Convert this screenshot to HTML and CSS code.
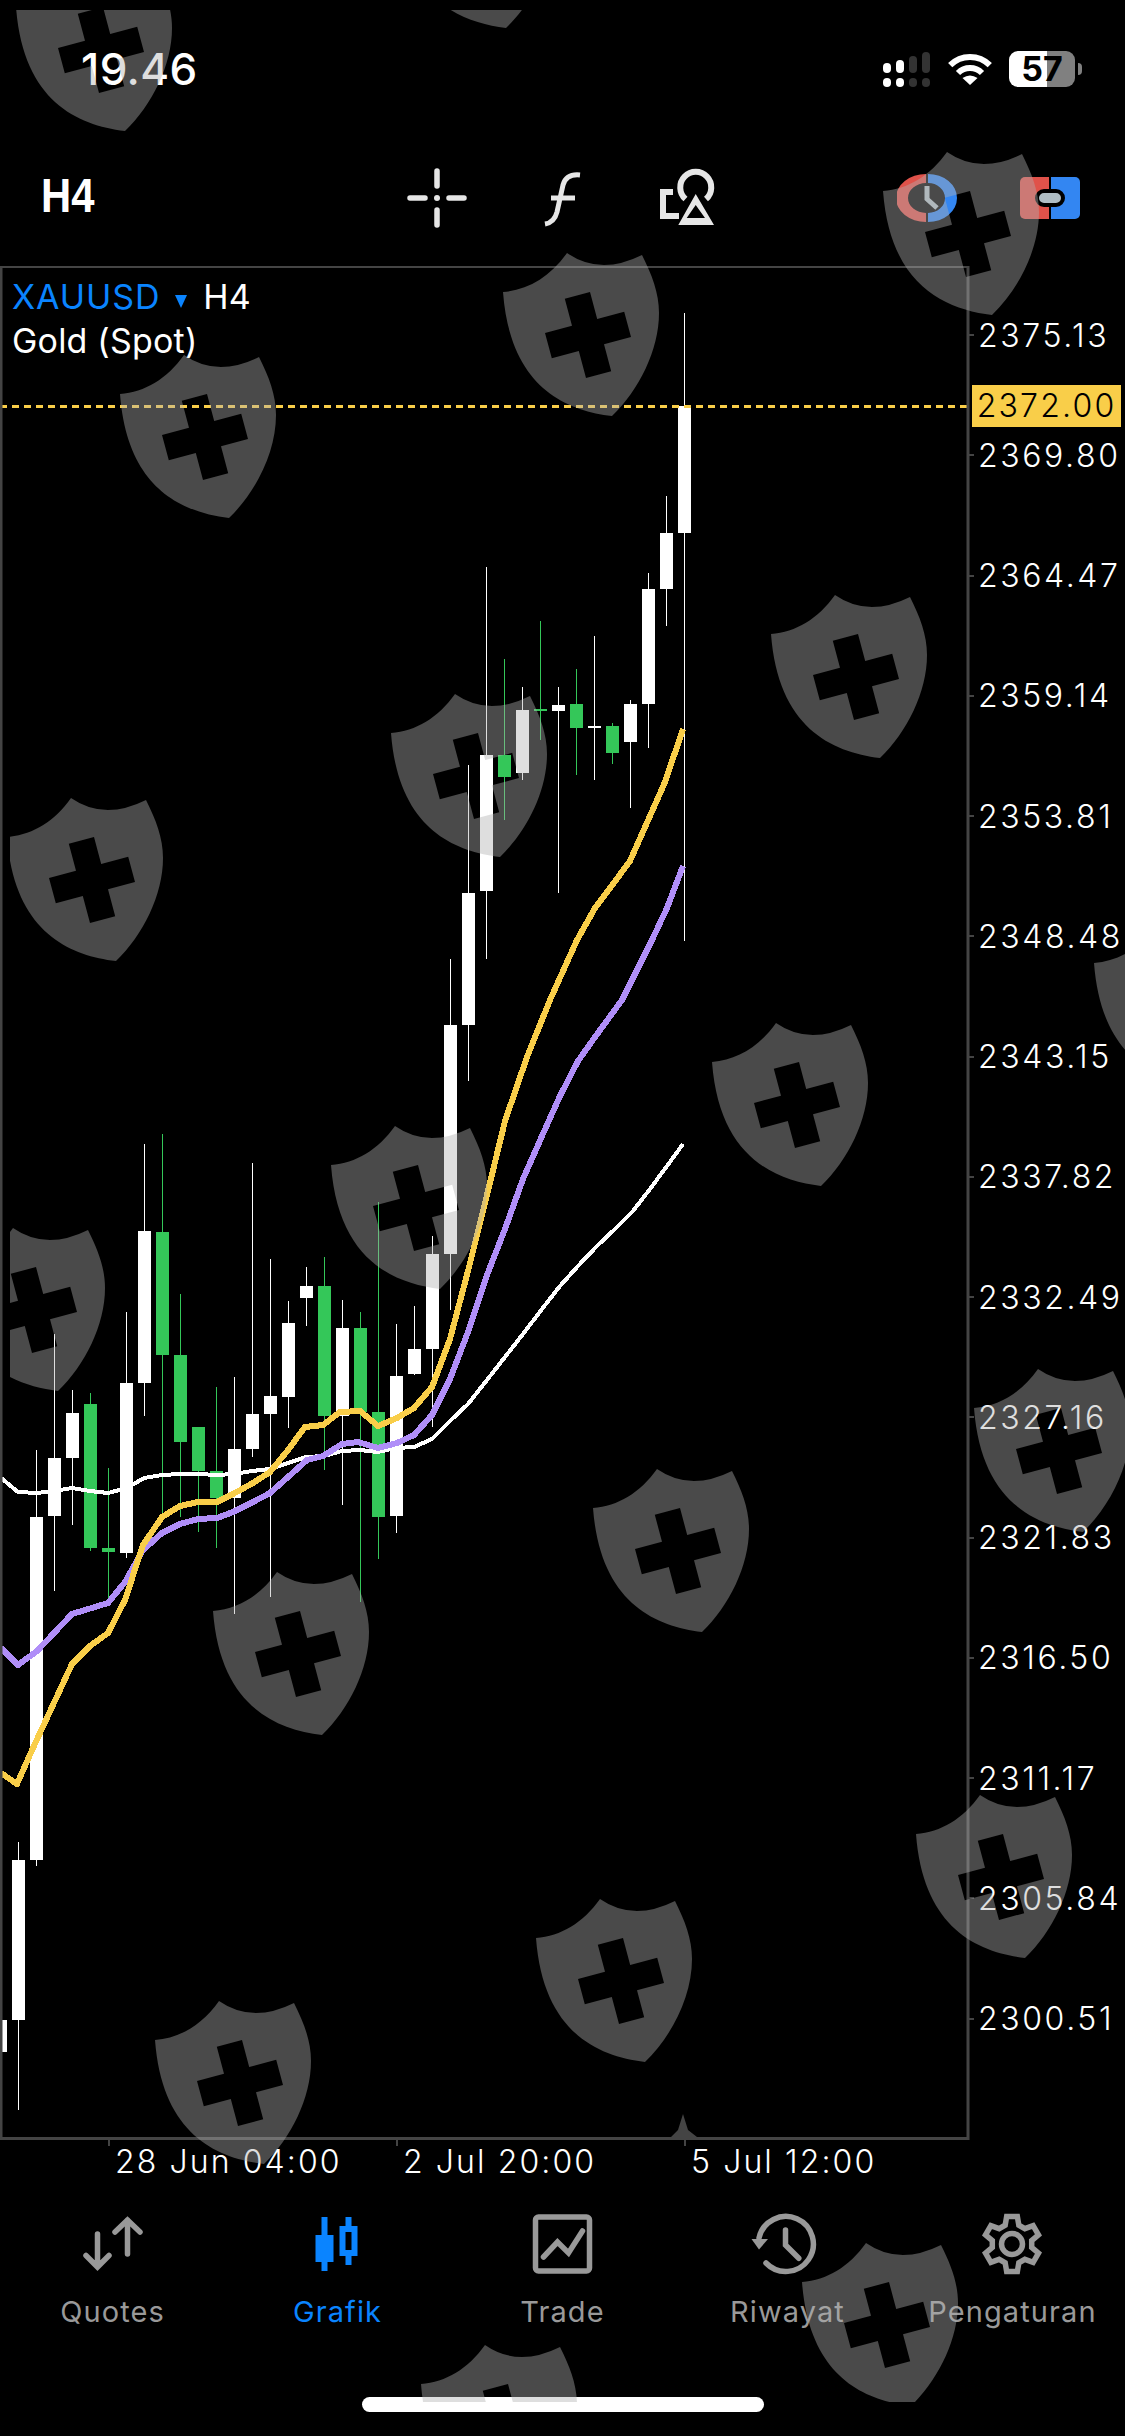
FILE: index.html
```html
<!DOCTYPE html>
<html lang="id">
<head>
    <meta charset="UTF-8">
    <meta name="viewport" content="width=device-width, initial-scale=1.0">
    <title>XAUUSD H4</title>
    <link rel="stylesheet" href="styles.css">
</head>
<body>
    <div class="status">
        <span class="clock">19.46</span>
        <div class="status-icons">
            <svg class="signal" width="48" height="36" viewBox="0 0 48 36">
                <rect class="on" x="0" y="12" width="8" height="10" rx="4"/>
                <rect class="on" x="13" y="9" width="8" height="13" rx="4"/>
                <rect class="off" x="26" y="5" width="8" height="17" rx="4"/>
                <rect class="off" x="39" y="1" width="8" height="21" rx="4"/>
                <rect class="on" x="0" y="27" width="8" height="9" rx="4"/>
                <rect class="on" x="13" y="27" width="8" height="9" rx="4"/>
                <rect class="off" x="26" y="27" width="8" height="9" rx="4"/>
                <rect class="off" x="39" y="27" width="8" height="9" rx="4"/>
            </svg>
            <svg class="wifi" width="46" height="34" viewBox="0 0 46 34">
                <path d="M3.2,13.2 A28,28 0 0 1 42.8,13.2 M11,21 A17,17 0 0 1 35,21"/>
                <path class="wifi-dot" d="M23,33 L15.5,26 Q23,21 30.5,26 Z"/>
            </svg>
            <div class="battery"><span>57</span></div>
            <div class="battery-cap"></div>
        </div>
    </div>

    <div class="toolbar">
        <div class="period"><span>H4</span></div>
        <svg class="tool" width="60" height="60" viewBox="0 0 60 60">
            <path d="M30,3 V18 M30,42 V57 M3,30 H18 M42,30 H57"/>
            <circle class="dot" cx="30" cy="30" r="3"/>
        </svg>
        <svg class="tool" width="60" height="60" viewBox="0 0 60 60">
            <path class="thin" d="M48,7 C38,6 33,10 31,17 L25,44 C23,52 19,55 13,56 M19,30 H43"/>
        </svg>
        <svg class="tool" width="60" height="60" viewBox="0 0 60 60">
            <path class="sharp" d="M16,24 H6 V48 H22"/>
            <path class="sharp" d="M28.5,31 A15.5,15.5 0 1 1 49,31"/>
            <path class="solid" fill-rule="evenodd" d="M38.7,26 L57,57 H21.3 Z M38.7,37 L29.7,50 H48 Z"/>
        </svg>
        <div class="tool-right">
            <svg width="60" height="48" viewBox="0 0 60 48">
                <path class="red" d="M29,0 A30,24 0 0 0 29,48 V39 A18,15 0 0 1 29,9 Z"/>
                <path class="blue" d="M31,0 A29,24 0 0 1 31,48 V39 A17,15 0 0 0 31,9 Z"/>
                <path class="hand" d="M30,12 V25 L40,34"/>
            </svg>
            <div class="chip"><span></span></div>
        </div>
    </div>

    <div class="main">
        <div class="plot">
            <svg id="chart" width="970" height="1874" viewBox="0 266 970 1874">
                <g id="candles"></g>
                <g id="lines"></g>
                <line class="bid-line" x1="0" y1="406.5" x2="967" y2="406.5"/>
                <polygon class="peak" points="683,2114 688,2130 697,2137 671,2137 678,2130"/>
                <rect class="frame" x="1" y="266.5" width="967" height="1872"/>
            </svg>
            <div class="legend">
                <div><span class="symbol">XAUUSD</span><span class="caret"></span><span>H4</span></div>
                <div>Gold (Spot)</div>
            </div>
        </div>
        <div class="prices">
            <div class="price">2375.13</div>
            <div class="price">2369.80</div>
            <div class="price">2364.47</div>
            <div class="price">2359.14</div>
            <div class="price">2353.81</div>
            <div class="price">2348.48</div>
            <div class="price">2343.15</div>
            <div class="price">2337.82</div>
            <div class="price">2332.49</div>
            <div class="price">2327.16</div>
            <div class="price">2321.83</div>
            <div class="price">2316.50</div>
            <div class="price">2311.17</div>
            <div class="price">2305.84</div>
            <div class="price">2300.51</div>
            <div class="bid-tag">2372.00</div>
        </div>
    </div>

    <div class="axis">
        <div class="date">28 Jun 04:00</div>
        <div class="date">2 Jul 20:00</div>
        <div class="date">5 Jul 12:00</div>
    </div>

    <div class="tabs">
        <div class="tab">
            <svg class="tab-icon" width="60" height="60" viewBox="0 0 60 60">
                <path d="M44.5,40 V6 M32,18 L44.5,6 L57,18 M14.5,20 V53 M3,41.5 L14.5,53 L26,41.5"/>
            </svg>
            <span>Quotes</span>
        </div>
        <div class="tab active">
            <svg class="tab-icon" width="60" height="60" viewBox="0 0 60 60">
                <path class="fill" fill-rule="evenodd" d="M13.5,3 H19.5 V21 H25.5 V48 H19.5 V57 H13.5 V48 H7.5 V21 H13.5 Z M37.5,3 H43.5 V12 H49.5 V42 H43.5 V51 H37.5 V42 H31.5 V12 H37.5 Z M37.5,18 V36 H43.5 V18 Z"/>
            </svg>
            <span>Grafik</span>
        </div>
        <div class="tab">
            <svg class="tab-icon" width="60" height="60" viewBox="0 0 60 60">
                <rect x="2.5" y="3" width="54" height="54" rx="3"/>
                <path d="M10.5,43 L24.5,28 L35.5,39 L49.5,17"/>
            </svg>
            <span>Trade</span>
        </div>
        <div class="tab">
            <svg class="tab-icon" width="60" height="60" viewBox="0 0 60 60">
                <path d="M1,24 A27.5,27.5 0 1 1 8,49 M27.5,16 V31 L40.8,44.3"/>
                <polygon class="fill" points="-6.5,25 10,25 1,35.5"/>
            </svg>
            <span>Riwayat</span>
        </div>
        <div class="tab">
            <svg class="tab-icon" width="60" height="60" viewBox="0 0 60 60">
                <g transform="translate(29,30)">
                    <polygon points="-6.84,-18.79 -5.34,-27.49 5.34,-27.49 6.84,-18.79 12.86,-15.32 21.13,-18.37 26.47,-9.12 19.7,-3.47 19.7,3.47 26.47,9.12 21.13,18.37 12.86,15.32 6.84,18.79 5.34,27.49 -5.34,27.49 -6.84,18.79 -12.86,15.32 -21.13,18.37 -26.47,9.12 -19.7,3.47 -19.7,-3.47 -26.47,-9.12 -21.13,-18.37 -12.86,-15.32"/>
                    <circle cx="0" cy="0" r="10.5"/>
                </g>
            </svg>
            <span>Pengaturan</span>
        </div>
    </div>

    <div class="home-bar"></div>

    <svg class="watermark" width="1115" height="2392" viewBox="10 10 1115 2392">
        <defs>
            <path id="shield" fill-rule="evenodd" d="M-21,-82 Q12,-59 54,-80 C64,-60 71,-42 71,-22 C71,15 51,55 24,81 C-25,75 -78,50 -85,-43 C-60,-45 -38,-58 -21,-82 Z M-23.2,-36.2 L2,-43 L9.2,-16 L36.2,-23.2 L43,2 L16,9.2 L23.2,36.2 L-2,43 L-9.2,16 L-36.2,23.2 L-43,-2 L-16,-9.2 Z"/>
        </defs>
        <use href="#shield" x="101" y="50"/>
        <use href="#shield" x="482" y="-53"/>
        <use href="#shield" x="968" y="234"/>
        <use href="#shield" x="588" y="335"/>
        <use href="#shield" x="205" y="437"/>
        <use href="#shield" x="856" y="677"/>
        <use href="#shield" x="476" y="776"/>
        <use href="#shield" x="92" y="880"/>
        <use href="#shield" x="797" y="1105"/>
        <use href="#shield" x="1179" y="1006"/>
        <use href="#shield" x="416" y="1208"/>
        <use href="#shield" x="34" y="1310"/>
        <use href="#shield" x="1059" y="1451"/>
        <use href="#shield" x="678" y="1551"/>
        <use href="#shield" x="298" y="1654"/>
        <use href="#shield" x="1001" y="1877"/>
        <use href="#shield" x="621" y="1981"/>
        <use href="#shield" x="240" y="2083"/>
        <use href="#shield" x="887" y="2325"/>
        <use href="#shield" x="506" y="2427"/>
    </svg>

    <script src="chart.js"></script>
</body>
</html>
```

FILE: styles.css
```css
* {
    box-sizing: border-box;
}

html, body {
    margin: 0;
    padding: 0;
}

body {
    position: relative;
    width: 1125px;
    height: 2436px;
    overflow: hidden;
    background-color: #000;
    color: #fff;
    font-family: Inter, "Noto Sans", sans-serif;
}

.status {
    display: flex;
    justify-content: space-between;
    height: 130px;
    padding: 51px 43px 0 81px;
}

.clock {
    font-size: 44px;
    font-weight: 500;
    letter-spacing: 0.4px;
    line-height: 36px;
}

.status-icons {
    display: flex;
    align-items: flex-start;
}

.signal .on {
    fill: #fff;
}

.signal .off {
    fill: #333;
}

.wifi {
    margin: 1px 0 0 16px;
    fill: none;
    stroke: #fff;
    stroke-width: 6;
}

.wifi .wifi-dot {
    fill: #fff;
    stroke: none;
}

.battery {
    width: 66px;
    height: 36px;
    margin-left: 16px;
    border-radius: 9px;
    background: linear-gradient(to right, #fff 0, #fff 38px, #808080 38px);
    color: #000;
    font-size: 34px;
    font-weight: 700;
    line-height: 36px;
    text-align: center;
}

.battery-cap {
    width: 4px;
    height: 12px;
    margin: 12px 0 0 3px;
    border-radius: 0 4px 4px 0;
    background-color: #808080;
}

.toolbar {
    display: flex;
    align-items: center;
    height: 136px;
}

.period {
    flex: none;
    width: 407px;
    padding: 0 0 6px 41px;
    font-family: "Liberation Sans", sans-serif;
    font-size: 48px;
    font-weight: 700;
}

.period span {
    display: inline-block;
    transform: scaleX(0.87);
    transform-origin: left center;
}

.tool {
    flex: none;
    margin-right: 65px;
    fill: none;
    stroke: #e6e6e6;
    stroke-width: 5.5;
    stroke-linecap: round;
}

.tool .dot {
    fill: #e6e6e6;
    stroke: none;
}

.tool .thin {
    stroke-width: 5;
    stroke-linecap: butt;
}

.tool .sharp {
    stroke-width: 6;
    stroke-linecap: butt;
}

.tool .solid {
    fill: #e6e6e6;
    stroke: none;
}

.tool-right {
    display: flex;
    align-items: center;
    gap: 63px;
    margin-left: 115px;
}

.tool-right .red {
    fill: #e0524a;
}

.tool-right .blue {
    fill: #3386f2;
}

.tool-right .hand {
    fill: none;
    stroke: #b0bec5;
    stroke-width: 5;
}

.chip {
    display: flex;
    align-items: center;
    justify-content: center;
    width: 60px;
    height: 42px;
    border-radius: 5px;
    background: linear-gradient(to right, #e0524a 0, #e0524a 29px, #000 29px, #000 31px, #3386f2 31px);
}

.chip span {
    width: 30px;
    height: 18px;
    border: 4px solid #000;
    border-radius: 9px;
    background-color: #b0bec5;
}

.main {
    display: flex;
    height: 1874px;
}

.plot {
    position: relative;
    width: 970px;
    height: 1874px;
}

#chart {
    display: block;
}

.frame {
    fill: none;
    stroke: #444;
    stroke-width: 3;
}

.bid-line {
    stroke: #f9ce49;
    stroke-width: 3;
    stroke-dasharray: 7 5;
}

.peak {
    fill: #444;
}

.wick-up,
.body-up {
    fill: #fff;
}

.wick-down,
.body-down {
    fill: #34c759;
}

.ma {
    fill: none;
    shape-rendering: crispEdges;
    stroke-linejoin: round;
}

.ma-white {
    stroke: #fff;
    stroke-width: 4;
}

.ma-purple {
    stroke: #b08ef8;
    stroke-width: 6;
}

.ma-yellow {
    stroke: #f9ce49;
    stroke-width: 6;
}

.legend {
    position: absolute;
    top: 9px;
    left: 12px;
    font-size: 34px;
    letter-spacing: 0.2px;
    line-height: 44px;
}

.symbol {
    color: #0a84ff;
    letter-spacing: 0.9px;
}

.caret {
    display: inline-block;
    width: 0;
    height: 0;
    margin: 0 16px 1px 15px;
    border-top: 13px solid #0a84ff;
    border-right: 6px solid transparent;
    border-left: 6px solid transparent;
}

.prices {
    position: relative;
    display: flex;
    flex-direction: column;
    flex: 1;
    padding-top: 9px;
}

.price {
    position: relative;
    display: flex;
    align-items: center;
    flex: none;
    height: 120.26px;
    padding-left: 8px;
    font-size: 32px;
    font-weight: 300;
    letter-spacing: 2.6px;
}

.price::before {
    content: "";
    position: absolute;
    left: -2px;
    top: 59px;
    width: 6px;
    height: 2px;
    background-color: #444;
}

.bid-tag {
    position: absolute;
    top: 119px;
    left: 2px;
    width: 149px;
    height: 42px;
    background-color: #f9ce49;
    color: #000;
    font-size: 32px;
    font-weight: 300;
    letter-spacing: 2.2px;
    line-height: 42px;
    text-align: center;
}

.axis {
    display: flex;
    height: 60px;
    padding-left: 115px;
}

.date {
    position: relative;
    width: 288px;
    font-size: 32px;
    font-weight: 300;
    letter-spacing: 2.1px;
    line-height: 44px;
}

.date::before {
    content: "";
    position: absolute;
    left: -7px;
    top: 0;
    width: 2px;
    height: 6px;
    background-color: #444;
}

.tabs {
    display: grid;
    grid-template-columns: repeat(5, 225px);
    height: 197px;
    padding-top: 14px;
}

.tab {
    display: flex;
    flex-direction: column;
    align-items: center;
    color: #999;
    font-size: 29px;
    letter-spacing: 1.1px;
    line-height: 36px;
}

.tab span {
    margin-top: 20px;
    white-space: nowrap;
}

.tab-icon {
    overflow: visible;
    fill: none;
    stroke: #999;
    stroke-width: 5.5;
    stroke-linecap: round;
}

.tab-icon .fill {
    fill: #999;
    stroke: none;
}

.tab.active {
    color: #0a84ff;
}

.tab.active .fill {
    fill: #0a84ff;
}

.home-bar {
    width: 402px;
    height: 15px;
    margin: 0 auto;
    border-radius: 8px;
    background-color: #fff;
}

.watermark {
    position: absolute;
    top: 10px;
    left: 10px;
    fill: rgba(176, 176, 176, 0.42);
    pointer-events: none;
}
```

FILE: chart.js
```js
// [wick top, body top, body bottom, wick bottom, direction], one per bar, 18px apart
const bars = [
    [2020, 2020, 2052, 2052, 'up'],
    [1842, 1860, 2020, 2110, 'up'],
    [1450, 1517, 1860, 1866, 'up'],
    [1334, 1458, 1516, 1591, 'up'],
    [1390, 1413, 1458, 1525, 'up'],
    [1393, 1404, 1548, 1551, 'down'],
    [1468, 1548, 1552, 1600, 'down'],
    [1312, 1383, 1553, 1558, 'up'],
    [1144, 1231, 1383, 1416, 'up'],
    [1134, 1232, 1355, 1515, 'down'],
    [1294, 1355, 1442, 1517, 'down'],
    [1427, 1427, 1471, 1532, 'down'],
    [1387, 1471, 1498, 1548, 'down'],
    [1377, 1449, 1498, 1614, 'up'],
    [1163, 1414, 1449, 1457, 'up'],
    [1259, 1396, 1414, 1597, 'up'],
    [1301, 1323, 1397, 1428, 'up'],
    [1267, 1286, 1298, 1326, 'up'],
    [1257, 1286, 1416, 1470, 'down'],
    [1300, 1328, 1416, 1505, 'up'],
    [1312, 1328, 1412, 1602, 'down'],
    [1202, 1412, 1517, 1559, 'down'],
    [1324, 1376, 1516, 1533, 'up'],
    [1306, 1349, 1374, 1375, 'up'],
    [1236, 1254, 1349, 1427, 'up'],
    [959, 1025, 1254, 1310, 'up'],
    [765, 893, 1025, 1081, 'up'],
    [567, 755, 891, 959, 'up'],
    [659, 755, 777, 820, 'down'],
    [687, 710, 773, 780, 'up'],
    [621, 709, 711, 740, 'down'],
    [687, 705, 711, 893, 'up'],
    [669, 704, 728, 775, 'down'],
    [636, 726, 728, 780, 'up'],
    [723, 726, 753, 764, 'down'],
    [700, 704, 742, 808, 'up'],
    [573, 589, 704, 748, 'up'],
    [496, 533, 589, 626, 'up'],
    [313, 406, 533, 941, 'up']
];

const averages = {
    white: '1,1478 18,1492 37,1493 54,1491 72,1488 90,1491 108,1493 127,1488 144,1478 162,1475 180,1474 198,1474 217,1475 234,1474 252,1471 270,1469 288,1463 306,1457 324,1456 342,1451 360,1450 378,1452 396,1448 414,1447 432,1439 450,1421 468,1404 487,1380 505,1357 523,1334 542,1309 560,1286 578,1266 597,1246 615,1229 633,1211 650,1189 667,1166 683,1144',
    purple: '1,1648 18,1665 37,1651 72,1614 108,1603 125,1582 143,1550 162,1533 180,1524 198,1519 217,1518 233,1512 253,1502 270,1493 288,1477 307,1460 323,1456 342,1444 358,1442 378,1448 397,1443 414,1435 432,1415 450,1379 468,1332 487,1275 505,1229 523,1179 542,1136 560,1096 578,1061 595,1037 622,1000 652,940 667,908 683,866',
    yellow: '1,1773 17,1784 33,1748 72,1664 90,1646 108,1633 125,1600 143,1545 162,1517 180,1506 198,1502 217,1502 233,1494 253,1483 270,1472 288,1450 305,1427 323,1425 340,1412 360,1411 378,1426 397,1418 414,1408 432,1387 450,1339 468,1271 487,1195 505,1121 527,1057 550,1000 577,940 595,908 613,884 630,861 650,816 665,782 683,729'
};

const SVG_NS = 'http://www.w3.org/2000/svg';
const candlesGroup = document.getElementById('candles');
const linesGroup = document.getElementById('lines');

function addRect(x, y, width, height, className) {
    const rect = document.createElementNS(SVG_NS, 'rect');
    rect.setAttribute('x', x);
    rect.setAttribute('y', y);
    rect.setAttribute('width', width);
    rect.setAttribute('height', height);
    rect.setAttribute('class', className);
    candlesGroup.appendChild(rect);
}

bars.forEach((bar, i) => {
    const [wickTop, bodyTop, bodyBottom, wickBottom, direction] = bar;
    const x = i * 18;
    addRect(x, wickTop, 1, wickBottom - wickTop, 'wick-' + direction);
    addRect(x - 6, bodyTop, 13, bodyBottom - bodyTop, 'body-' + direction);
});

for (const [name, points] of Object.entries(averages)) {
    const line = document.createElementNS(SVG_NS, 'polyline');
    line.setAttribute('points', points);
    line.setAttribute('class', 'ma ma-' + name);
    linesGroup.appendChild(line);
}
```
